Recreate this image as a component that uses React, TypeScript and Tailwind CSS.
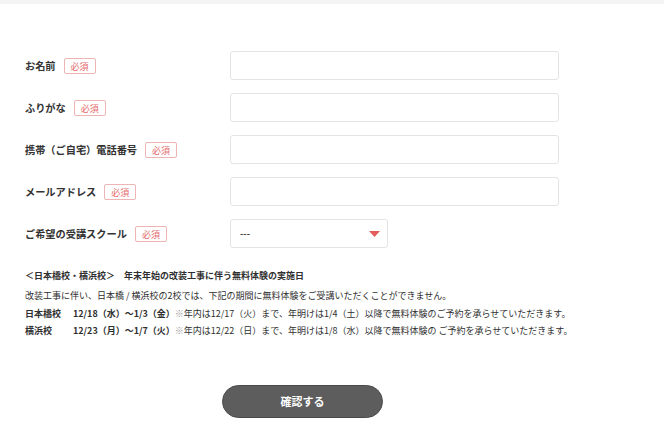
const font = { fontFamily: '"Noto Sans CJK JP", "Noto Sans", sans-serif' }

const fields = [
  { label: 'お名前' },
  { label: 'ふりがな' },
  { label: '携帯（ご自宅）電話番号' },
  { label: 'メールアドレス' },
]

function Badge() {
  return (
    <span className="inline-flex items-center justify-center h-[16px] px-[6px] border border-[#efb4b4] rounded-[2px] text-[9px] leading-none text-[#e46a6a]">
      必須
    </span>
  )
}

export default function App() {
  return (
    <div className="w-[664px] h-[444px] bg-white text-[#333] overflow-hidden" style={font}>
      <div className="h-[4px] bg-[#f4f4f4]" />

      <div className="px-[25px] pt-[47px]">
        {/* Form rows */}
        <div className="flex flex-col gap-[13px]">
          {fields.map(f => (
            <div key={f.label} className="flex items-center h-[29px]">
              <div className="w-[205px] flex items-center gap-[8px] pt-[1px]">
                <span className="text-[10.2px] font-bold leading-none">{f.label}</span>
                <Badge />
              </div>
              <div className="w-[329px] h-[29px] border border-[#e4e4e4] rounded-[3px] bg-white" />
            </div>
          ))}
          <div className="flex items-center h-[29px]">
            <div className="w-[205px] flex items-center gap-[8px] pt-[1px]">
              <span className="text-[10.2px] font-bold leading-none">ご希望の受講スクール</span>
              <Badge />
            </div>
            <div className="w-[158px] h-[29px] border border-[#e4e4e4] rounded-[3px] bg-white flex items-center justify-between pl-[9px] pr-[7px]">
              <span className="text-[9px] font-bold leading-none text-[#444]">---</span>
              <svg width="11" height="6" viewBox="0 0 11 6">
                <polygon points="0,0 11,0 5.5,6" fill="#e35d5d" />
              </svg>
            </div>
          </div>
        </div>

        {/* Notice */}
        <div className="mt-[19px] text-[9px] text-[#2f2f2f]">
          <p className="font-bold leading-[18px]">＜日本橋校・横浜校＞　年末年始の改装工事に伴う無料体験の実施日</p>
          <div className="mt-[2px] leading-[17.5px]">
            <p>改装工事に伴い、日本橋 / 横浜校の2校では、下記の期間に無料体験をご受講いただくことができません。</p>
            <p className="flex">
              <span className="w-[48px] font-bold">日本橋校</span>
              <span className="font-bold">12/18（水）～1/3（金）</span>
              <span><span className="text-[#999]">※</span>年内は12/17（火）まで、年明けは1/4（土）以降で無料体験のご予約を承らせていただきます。</span>
            </p>
            <p className="flex">
              <span className="w-[48px] font-bold">横浜校</span>
              <span className="font-bold">12/23（月）～1/7（火）</span>
              <span><span className="text-[#999]">※</span>年内は12/22（日）まで、年明けは1/8（水）以降で無料体験の ご予約を承らせていただきます。</span>
            </p>
          </div>
        </div>

        {/* Submit */}
        <div className="mt-[45px] pl-[197px]">
          <button className="w-[161px] h-[33px] rounded-full bg-[#5d5d5d] border border-[#4a4a4a] text-white text-[11px] font-bold">
            確認する
          </button>
        </div>
      </div>
    </div>
  )
}
